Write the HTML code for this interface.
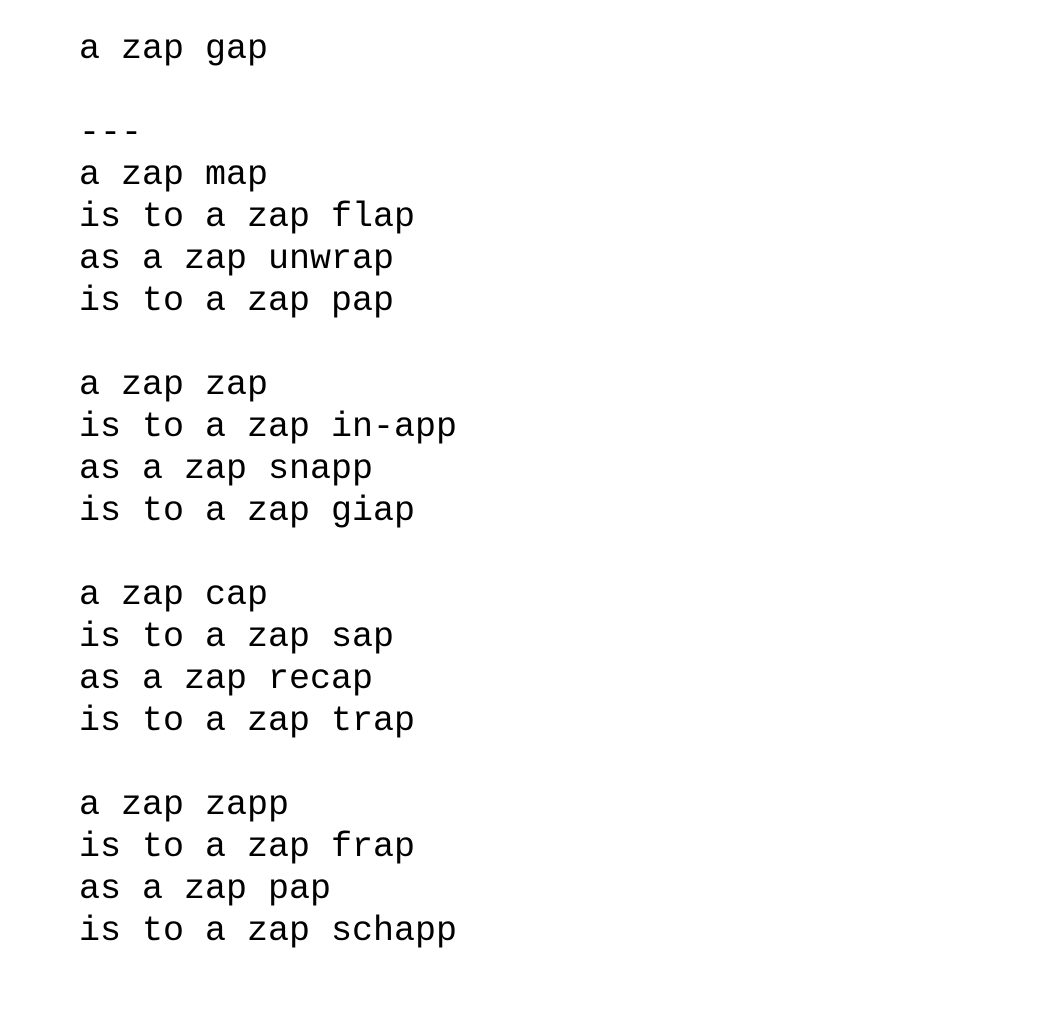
<!DOCTYPE html>
<html><head><meta charset="utf-8"><style>
html,body{margin:0;padding:0;background:#fff;width:1040px;height:1020px;overflow:hidden}
pre{position:absolute;left:79px;top:28px;margin:0;font-family:"Liberation Mono",monospace;font-size:35px;line-height:42px;color:#000}
</style></head><body><pre>a zap gap

---
a zap map
is to a zap flap
as a zap unwrap
is to a zap pap

a zap zap
is to a zap in-app
as a zap snapp
is to a zap giap

a zap cap
is to a zap sap
as a zap recap
is to a zap trap

a zap zapp
is to a zap frap
as a zap pap
is to a zap schapp</pre></body></html>
